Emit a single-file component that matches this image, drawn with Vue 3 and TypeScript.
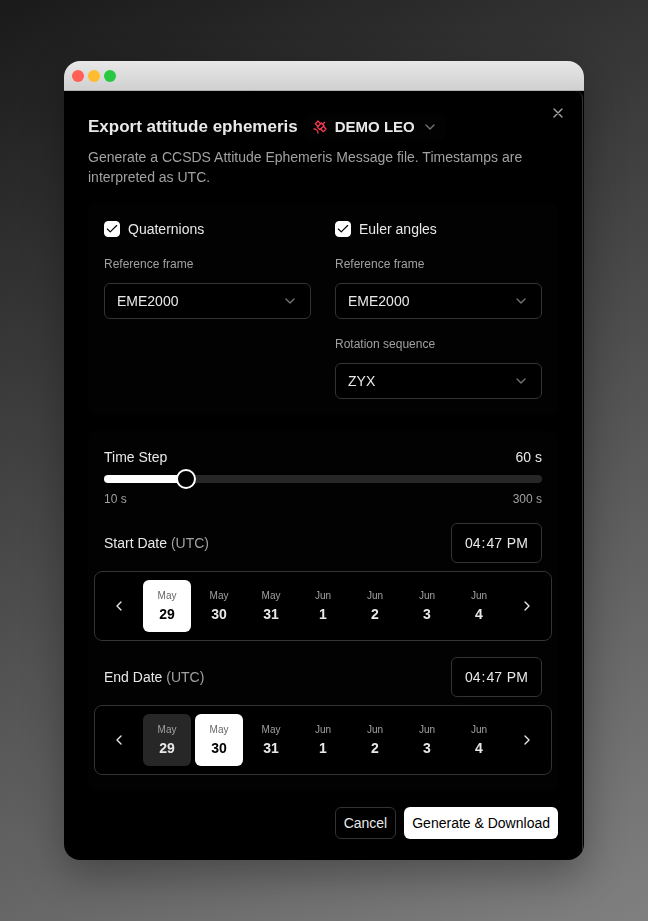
<script setup lang="ts">
import { computed, reactive, ref } from 'vue'

interface Day {
  month: string
  day: number
}

interface DateField {
  id: string
  label: string
  time: string
  selected: number
  marked: number
}

const frames: string[] = ['EME2000', 'ICRF', 'TEME']
const sequences: string[] = ['ZYX', 'XYZ', 'ZXZ']

const quaternions = ref(true)
const euler = ref(true)
const quaternionFrame = ref('EME2000')
const eulerFrame = ref('EME2000')
const sequence = ref('ZYX')

const minStep = 10
const maxStep = 300
const step = ref(60)
const stepRatio = computed(() => (step.value - minStep) / (maxStep - minStep))

const days: Day[] = [
  { month: 'May', day: 29 },
  { month: 'May', day: 30 },
  { month: 'May', day: 31 },
  { month: 'Jun', day: 1 },
  { month: 'Jun', day: 2 },
  { month: 'Jun', day: 3 },
  { month: 'Jun', day: 4 },
]

const dateFields = reactive<DateField[]>([
  { id: 'start', label: 'Start Date', time: '16:47', selected: 0, marked: -1 },
  { id: 'end', label: 'End Date', time: '16:47', selected: 1, marked: 0 },
])

function shift(field: DateField, delta: number): void {
  field.selected = Math.min(days.length - 1, Math.max(0, field.selected + delta))
}
</script>

<template>
  <main class="stage">
    <div class="window">
      <div class="titlebar">
        <span class="dot close-dot"></span>
        <span class="dot min-dot"></span>
        <span class="dot max-dot"></span>
      </div>

      <section class="dialog" role="dialog" aria-labelledby="dialog-title">
        <button class="dismiss" type="button" aria-label="Close">
          <svg class="icon" viewBox="0 0 24 24"><path d="M18 6 6 18M6 6l12 12" /></svg>
        </button>

        <header class="header">
          <div class="title-row">
            <h1 id="dialog-title">Export attitude ephemeris</h1>
            <button class="craft" type="button">
              <svg class="icon satellite" viewBox="0 0 24 24">
                <path d="M13 7 9 3 5 7l4 4" />
                <path d="m17 11 4 4-4 4-4-4" />
                <path d="m8 12 4 4 6-6-4-4Z" />
                <path d="m16 8 3-3" />
                <path d="M9 21a6 6 0 0 0-6-6" />
              </svg>
              <span>DEMO LEO</span>
              <svg class="icon muted" viewBox="0 0 24 24"><path d="m6 9 6 6 6-6" /></svg>
            </button>
          </div>
          <p>Generate a CCSDS Attitude Ephemeris Message file. Timestamps are interpreted as UTC.</p>
        </header>

        <div class="card formats">
          <div class="column">
            <label class="check">
              <span class="box">
                <input v-model="quaternions" type="checkbox" />
                <svg class="icon tick" viewBox="0 0 24 24"><path d="M20 6 9 17l-5-5" /></svg>
              </span>
              Quaternions
            </label>
            <div class="field">
              <label for="quaternion-frame">Reference frame</label>
              <div class="select">
                <select id="quaternion-frame" v-model="quaternionFrame">
                  <option v-for="f in frames" :key="f">{{ f }}</option>
                </select>
                <svg class="icon muted" viewBox="0 0 24 24"><path d="m6 9 6 6 6-6" /></svg>
              </div>
            </div>
          </div>

          <div class="column">
            <label class="check">
              <span class="box">
                <input v-model="euler" type="checkbox" />
                <svg class="icon tick" viewBox="0 0 24 24"><path d="M20 6 9 17l-5-5" /></svg>
              </span>
              Euler angles
            </label>
            <div class="field">
              <label for="euler-frame">Reference frame</label>
              <div class="select">
                <select id="euler-frame" v-model="eulerFrame">
                  <option v-for="f in frames" :key="f">{{ f }}</option>
                </select>
                <svg class="icon muted" viewBox="0 0 24 24"><path d="m6 9 6 6 6-6" /></svg>
              </div>
            </div>
            <div class="field">
              <label for="sequence">Rotation sequence</label>
              <div class="select">
                <select id="sequence" v-model="sequence">
                  <option v-for="s in sequences" :key="s">{{ s }}</option>
                </select>
                <svg class="icon muted" viewBox="0 0 24 24"><path d="m6 9 6 6 6-6" /></svg>
              </div>
            </div>
          </div>
        </div>

        <div class="card timing">
          <div class="slider">
            <div class="between">
              <label for="step">Time Step</label>
              <output for="step">{{ step }} s</output>
            </div>
            <input
              id="step"
              v-model.number="step"
              class="range"
              type="range"
              :min="minStep"
              :max="maxStep"
              :style="{ '--ratio': stepRatio }"
            />
            <div class="between limits">
              <span>{{ minStep }} s</span>
              <span>{{ maxStep }} s</span>
            </div>
          </div>

          <div v-for="field in dateFields" :key="field.id" class="date">
            <div class="between">
              <label :for="field.id">{{ field.label }} <span class="zone">(UTC)</span></label>
              <input :id="field.id" v-model="field.time" class="time" type="time" />
            </div>
            <div class="strip">
              <button class="arrow" type="button" aria-label="Earlier" @click="shift(field, -1)">
                <svg class="icon" viewBox="0 0 24 24"><path d="m15 18-6-6 6-6" /></svg>
              </button>
              <div class="days">
                <button
                  v-for="(d, i) in days"
                  :key="i"
                  type="button"
                  class="day"
                  :class="{ selected: field.selected === i, marked: field.marked === i }"
                  @click="field.selected = i"
                >
                  <span class="month">{{ d.month }}</span>
                  <span class="number">{{ d.day }}</span>
                </button>
              </div>
              <button class="arrow" type="button" aria-label="Later" @click="shift(field, 1)">
                <svg class="icon" viewBox="0 0 24 24"><path d="m9 18 6-6-6-6" /></svg>
              </button>
            </div>
          </div>
        </div>

        <footer class="footer">
          <button class="action" type="button">Cancel</button>
          <button class="action primary" type="button">Generate &amp; Download</button>
        </footer>
      </section>
    </div>
  </main>
</template>

<style>
body {
  margin: 0;
}
</style>

<style scoped>
* {
  box-sizing: border-box;
}

.stage {
  min-height: 100vh;
  padding: 61px 64px;
  background: linear-gradient(155deg, #1a1a1a, #808080);
  color: #e8e8e8;
  font-family: 'Liberation Sans', Arial, sans-serif;
  font-size: 14px;
  line-height: 20px;
}

.window {
  border-radius: 16px;
  overflow: hidden;
  background: #000;
  box-shadow: 0 14px 40px rgba(0, 0, 0, 0.32);
}

.titlebar {
  display: flex;
  align-items: center;
  gap: 4px;
  height: 30px;
  padding: 0 8px;
  border-bottom: 1px solid #b0b0b0;
  background: linear-gradient(#e8e8e8, #d0d0d0);
}

.dot {
  width: 12px;
  height: 12px;
  border-radius: 50%;
}

.close-dot {
  background: #ff5f57;
}

.min-dot {
  background: #febc2e;
}

.max-dot {
  background: #28c840;
}

.dialog {
  position: relative;
  display: flex;
  flex-direction: column;
  gap: 16px;
  margin-right: 1px;
  padding: 22px 24px 21px;
  border-right: 1px solid #333;
  border-radius: 8px;
}

button,
select,
input {
  margin: 0;
  color: inherit;
  font: inherit;
}

button {
  padding: 0;
  border: 0;
  background: none;
  cursor: pointer;
}

.icon {
  display: block;
  flex: none;
  width: 16px;
  height: 16px;
  fill: none;
  stroke: currentColor;
  stroke-width: 2;
  stroke-linecap: round;
  stroke-linejoin: round;
}

.muted {
  color: #747474;
}

.dismiss {
  position: absolute;
  top: 14px;
  right: 16px;
  color: #a8a8a8;
}

.header {
  display: flex;
  flex-direction: column;
  gap: 6px;
  will-change: transform;
}

.title-row {
  display: flex;
  align-items: center;
  gap: 6px;
}

h1 {
  margin: 0;
  font-size: 17px;
  line-height: 28px;
}

.craft {
  display: flex;
  align-items: center;
  gap: 7px;
  height: 28px;
  padding: 0 8px;
  border-radius: 6px;
  background: #020202;
  font-size: 15px;
  font-weight: 700;
}

.satellite {
  color: #f03a50;
}

.header p {
  margin: 0;
  color: #a1a1a1;
}

.card {
  padding: 16px;
  border-radius: 8px;
  background: #020202;
  will-change: transform;
}

.formats {
  display: grid;
  grid-template-columns: 1fr 1fr;
  gap: 24px;
}

.column,
.timing {
  display: flex;
  flex-direction: column;
  gap: 16px;
}

.check {
  display: flex;
  align-items: center;
  gap: 8px;
}

.box {
  display: grid;
  place-items: center;
}

.box > * {
  grid-area: 1 / 1;
}

.box input {
  width: 16px;
  height: 16px;
  appearance: none;
  border: 1px solid #fff;
  border-radius: 4px;
}

.box input:checked {
  background: #fff;
}

.tick {
  width: 14px;
  height: 14px;
  color: #000;
  pointer-events: none;
}

.field {
  display: flex;
  flex-direction: column;
  gap: 10px;
}

.field label {
  color: #a1a1a1;
  font-size: 12px;
  line-height: 18px;
}

.select {
  display: grid;
  align-items: center;
}

.select > * {
  grid-area: 1 / 1;
}

.select select {
  width: 100%;
  height: 36px;
  padding: 0 36px 0 12px;
  appearance: none;
  border: 1px solid #333;
  border-radius: 6px;
  background: #000;
}

.select .icon {
  justify-self: end;
  margin-right: 13px;
  pointer-events: none;
}

.between {
  display: flex;
  align-items: center;
  justify-content: space-between;
}

.slider {
  display: flex;
  flex-direction: column;
  gap: 2px;
}

.range {
  --fill: calc(10px + (100% - 20px) * var(--ratio));
  width: 100%;
  height: 20px;
  appearance: none;
  background: none;
}

.range::-webkit-slider-runnable-track {
  height: 8px;
  border-radius: 4px;
  background: linear-gradient(to right, #fff var(--fill), #272727 var(--fill));
}

.range::-webkit-slider-thumb {
  width: 20px;
  height: 20px;
  margin-top: -6px;
  appearance: none;
  border: 2px solid #fff;
  border-radius: 50%;
  background: #000;
}

.limits {
  color: #a1a1a1;
  font-size: 12px;
  line-height: 16px;
}

.date {
  display: flex;
  flex-direction: column;
  gap: 8px;
}

.zone {
  color: #a1a1a1;
}

.time {
  height: 40px;
  padding: 0 12px;
  border: 1px solid #333;
  border-radius: 6px;
  background: #000;
}

.time::-webkit-calendar-picker-indicator {
  display: none;
}

.strip {
  display: flex;
  align-items: center;
  gap: 8px;
  margin: 0 -10px;
  padding: 8px;
  border: 1px solid #333;
  border-radius: 8px;
  background: #000;
}

.arrow {
  display: grid;
  place-items: center;
  width: 32px;
  height: 32px;
}

.days {
  display: flex;
  flex: 1;
  gap: 4px;
}

.day {
  display: flex;
  flex: 1;
  flex-direction: column;
  align-items: center;
  height: 52px;
  padding-top: 8px;
  border-radius: 6px;
}

.month {
  color: #a1a1a1;
  font-size: 10px;
  line-height: 16px;
}

.number {
  font-weight: 700;
}

.marked {
  background: #272727;
}

.selected {
  background: #fff;
  color: #000;
}

.selected .month {
  color: #666;
}

.footer {
  display: flex;
  justify-content: flex-end;
  gap: 8px;
}

.action {
  height: 32px;
  padding: 0 8px;
  border: 1px solid #333;
  border-radius: 6px;
}

.primary {
  border: 0;
  background: #fff;
  color: #000;
}
</style>
